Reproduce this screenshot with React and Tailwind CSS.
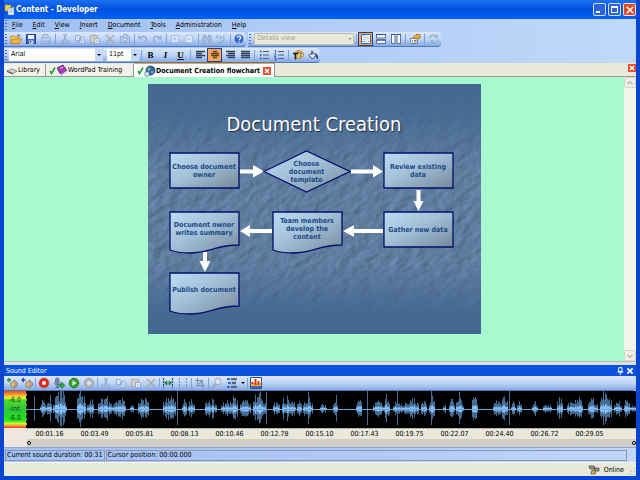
import clsx from 'clsx'

const MENU = ['File', 'Edit', 'View', 'Insert', 'Document', 'Tools', 'Administration', 'Help']

const TIMES = [
  '00:01.16', '00:03.49', '00:05.81', '00:08.13', '00:10.46', '00:12.78', '00:15.10',
  '00:17.43', '00:19.75', '00:22.07', '00:24.40', '00:26.72', '00:29.05'
]

// [start, end, peak] of each burst in the recording
const BURSTS = [
  [13, 20, 10], [20, 25, 11], [26, 31, 12], [27, 40, 17], [50, 59, 18], [60, 67, 11], [71, 84, 11], [84, 90, 9],
  [88, 99, 13], [103, 107, 5], [111, 122, 13], [136, 149, 14], [155, 160, 10], [161, 168, 10], [178, 190, 10],
  [194, 205, 9], [203, 211, 15], [213, 224, 11], [226, 239, 18], [246, 253, 8], [255, 263, 14], [263, 269, 8],
  [270, 275, 8], [276, 286, 11], [293, 300, 5], [306, 311, 8], [329, 335, 12], [346, 357, 8], [357, 363, 15],
  [366, 376, 8], [376, 382, 9], [381, 392, 11], [394, 400, 9], [402, 408, 13], [416, 419, 6], [422, 428, 10],
  [429, 437, 11], [445, 451, 14], [466, 474, 9], [472, 481, 13], [484, 489, 7], [490, 495, 9], [505, 511, 9],
  [516, 525, 5], [530, 536, 14], [540, 547, 9], [546, 556, 13], [561, 571, 12], [573, 585, 18], [587, 595, 8],
  [597, 603, 11], [603, 609, 4]
]

const SPIKES = [
  [7, 13], [23, 14], [36, 18], [53, 18], [80, 13], [150, 18], [239, 17], [281, 17], [309, 14], [340, 18],
  [370, 18], [404, 18], [432, 17], [482, 18], [576, 18]
]

const buildWave = () => {
  let seed = 11
  const rand = () => {
    seed = (seed * 16807) % 2147483647
    return seed / 2147483647
  }
  let outer = ''
  let core = ''
  BURSTS.forEach(([from, to, peak]) => {
    for (let x = from; x < to; x++) {
      const shape = 0.45 + 0.55 * Math.sin((Math.PI * (x - from + 0.5)) / (to - from))
      const up = peak * shape * (0.35 + 0.75 * rand())
      const down = up * (0.75 + 0.25 * rand())
      outer += `M${x}.5 ${(18 - up).toFixed(1)}V${(18 + down).toFixed(1)}`
      const c = Math.max(1, up * 0.3)
      core += `M${x}.5 ${(18 - c).toFixed(1)}V${(18 + c).toFixed(1)}`
    }
  })
  SPIKES.forEach(([x, h]) => {
    outer += `M${x}.5 ${18 - h}V${18 + h * 0.9}`
  })
  return { outer, core }
}

const WAVE = buildWave()

const Icon = ({ children, size = 12 }) => (
  <svg width={size} height={size} viewBox="0 0 12 12" fill="none" className="shrink-0" aria-hidden="true">
    {children}
  </svg>
)

const GRAY = '#8fa9cf'

const ICONS = {
  open: (
    <>
      <path d="M1 10V3h3l1 1h4v2" fill="#f7d57a" stroke="#b98425" />
      <path d="M1 10.5 3 6h8.5L9.5 10.5z" fill="#f9b53c" stroke="#b4751a" strokeWidth=".7" />
      <path d="M7 2.500c1.500-1 3-.5 3 1" stroke="#31538f" />
    </>
  ),
  save: (
    <>
      <path d="M1.500 1.500h9v9h-9z" fill="#3f68c4" stroke="#26408c" />
      <path d="M3 2h6v4H3z" fill="#eef3ff" />
      <path d="M4 7.500h4.500V11H4z" fill="#c9d3e8" />
      <path d="M5 8h1v2H5z" fill="#26408c" />
    </>
  ),
  print: (
    <>
      <path d="M3 5V1.500h5V5M1.500 5h9v4h-9zM3 8h6v2.500H3z" stroke={GRAY} fill="#c3d5f1" strokeWidth=".9" />
      <circle cx="9.500" cy="9" r="1.500" fill={GRAY} />
    </>
  ),
  cut: (
    <>
      <path d="M7.500 1 4.500 8M4.500 1 7.500 8" stroke={GRAY} strokeWidth="1.200" />
      <circle cx="3.500" cy="9.500" r="1.500" stroke={GRAY} />
      <circle cx="8.500" cy="9.500" r="1.500" stroke={GRAY} />
    </>
  ),
  copy: (
    <path d="M1.500 2.500h4l1 1v4h-5zM5.500 4.500h4l1 1v5h-5zM7 7h2M7 9h2" stroke={GRAY} fill="#d5e2f7" strokeWidth=".9" />
  ),
  paste: (
    <>
      <path d="M1.500 2.500h7v7h-7z" fill="#d6cfc0" stroke="#a9a9b0" />
      <path d="M3.500 1.500h3v2h-3z" fill="#b9b9c0" />
      <path d="M5.500 5.500h4l1 1v4h-5zM7 8h2" fill="#e5ebf7" stroke={GRAY} />
    </>
  ),
  remove: <path d="m2 2 8 8M10 2 2 10" stroke="#a8a69f" strokeWidth="1.300" />,
  camera: (
    <>
      <path d="M1.500 3.500H4l1-2h3l1 2h1.500v6h-9z" fill="#bccfef" stroke={GRAY} />
      <circle cx="6" cy="6.500" r="2" stroke="#7f9ccc" fill="#dce8fa" />
    </>
  ),
  undo: <path d="M2 2.500V6h3.500M2.500 5.500C4 3 8.500 2.500 9.500 5.500c.3 1.500-.5 2.500-2 3.500" stroke={GRAY} strokeWidth="1.200" />,
  redo: <path d="M10 2.500V6H6.500M9.500 5.500C8 3 3.500 2.500 2.500 5.500c-.3 1.500.5 2.500 2 3.500" stroke={GRAY} strokeWidth="1.200" />,
  expand: <path d="M2.500 2.500h7v7h-7zM6 4v4M4 6h4" stroke="#a9c0e6" fill="#dbe7fa" />,
  collapse: <path d="M2.500 2.500h7v7h-7zM4 6h4" stroke="#a9c0e6" fill="#dbe7fa" />,
  find: (
    <path d="M2.500 2h2v2h3V2h2l1 4v4.500H7.500V7h-3v3.500H1.500V6z" fill="#a5bbdd" stroke={GRAY} strokeWidth=".8" />
  ),
  spell: (
    <>
      <path d="M1 5.500 2 2l1 3.500M1.300 4.500h1.500M5 2v3.500h1.500V3.800H5M10 2.300H8.500v3H10" stroke={GRAY} strokeWidth=".8" />
      <path d="m3.500 8 2 2.500L9.500 6" stroke="#93b5c9" strokeWidth="1.500" />
    </>
  ),
  help: (
    <>
      <circle cx="6" cy="6" r="5" fill="#2f66cf" stroke="#b9cdf2" />
      <path d="M4.300 4.700C4.300 2.500 8 2.700 7.700 4.800 7.500 6 6 5.800 6 7.300M6 8.300v1.300" stroke="#fff" strokeWidth="1.300" />
    </>
  ),
  layoutGrid: (
    <>
      <path d="M1.500 1.500h9v9h-9z" fill="#f4f8ff" stroke="#4268ab" />
      <path d="M4 2v8M2 8.500h8" stroke="#7a9bd0" strokeDasharray="1 1" />
      <path d="M5 3h4v4H5z" fill="#d3e1f7" />
    </>
  ),
  layoutRows: (
    <>
      <path d="M1.500 1.500h9v3.500h-9zM1.500 7h9v3.500h-9z" fill="#f4f8ff" stroke="#5f7396" />
      <path d="M1 1.500h10M1 7h10" stroke="#2e4d8a" />
    </>
  ),
  layoutCols: (
    <>
      <path d="M1.500 1.500H5v9H1.500zM7 1.500h3.500v9H7z" fill="#f4f8ff" stroke="#5f7396" />
      <path d="M1 1.500h4.500M6.500 1.500H11" stroke="#2e4d8a" />
    </>
  ),
  props: (
    <>
      <path d="M1.500 5.500h7v5h-7z" fill="#f3f3f0" stroke="#77849d" />
      <path d="M3 7.500h1M5 7.500h2.500M3 9h1M5 9h2.500" stroke="#42557f" strokeWidth=".8" />
      <path d="M4 5 7 1.500h4V5L8 6z" fill="#efab42" stroke="#94601a" strokeWidth=".7" />
    </>
  ),
  refresh: (
    <path d="M1.500 5.500C2 2 6.500 1 9 3.500V1.500M9.300 4H6.500M10.500 6.500C10 10 5.500 11 3 8.500v2M2.700 8h2.800" stroke="#8fb9b9" strokeWidth="1.300" />
  ),
  alignLeft: <path d="M2 2.500h9M2 4.500h6M2 6.500h9M2 8.500h6" stroke="#33405c" strokeWidth="1.400" />,
  alignCenter: <path d="M4 2.500h4M2 4.500h8M2 6.500h8M4 8.500h4" stroke="#5a4026" strokeWidth="1.500" />,
  alignRight: <path d="M2 2.500h9M4 4.500h7M2 6.500h9M4 8.500h7" stroke="#33405c" strokeWidth="1.400" />,
  justify: <path d="M2 2.500h9M2 4.500h9M2 6.500h9M2 8.500h9" stroke="#33405c" strokeWidth="1.400" />,
  bullets: (
    <>
      <path d="M2 2.500h1.500M2 6h1.500M2 9.500h1.500" stroke="#1f49a8" strokeWidth="1.500" />
      <path d="M5 2.500h6M5 6h6M5 9.500h6" stroke="#4d5c78" />
    </>
  ),
  numbers: (
    <>
      <path d="M2.500 1v2.500M1.500 5H3L1.500 7.500H3M1.500 9H3v2H1.500" stroke="#1f49a8" strokeWidth=".9" />
      <path d="M5 2.500h6M5 6h6M5 9.500h6" stroke="#4d5c78" />
    </>
  ),
  palette: (
    <>
      <ellipse cx="7" cy="5.500" rx="4.500" ry="4" fill="#f0c66a" stroke="#a8782a" strokeWidth=".7" />
      <circle cx="6.500" cy="3.500" r="1" fill="#d3392a" />
      <circle cx="9" cy="4.500" r="1" fill="#2d62cf" />
      <circle cx="8.500" cy="7.300" r="1" fill="#3aa23a" />
      <path d="M1 4.500h5M3.500 4.500v6" stroke="#1c1c1c" strokeWidth="1.500" />
    </>
  ),
  bucket: (
    <>
      <path d="m2 6.500 3.500-3.500L9 6.500 5.500 10z" fill="#e6ecf6" stroke="#26304d" strokeWidth=".9" />
      <path d="M5 1.500V6" stroke="#26304d" />
      <path d="M8 4.500c2 0 3.500 2 3 5.500C9.500 9.500 9 8 8.500 7z" fill="#28499c" />
    </>
  ),
  soundIn: (
    <>
      <path d="M1 3h4M3 1v4" stroke="#1d8f2b" strokeWidth="1.300" />
      <path d="M5 6 9 3v8L5 9z" fill="#e8c27d" stroke="#8c6428" strokeWidth=".8" />
      <path d="M10.500 4.500c1 1.500 1 3.500 0 5" stroke="#8c6428" />
    </>
  ),
  soundOut: (
    <>
      <path d="M.5 3H5M3 1 1 3l2 2" stroke="#1d3f9f" strokeWidth="1.200" />
      <path d="M5 6 9 3v8L5 9z" fill="#e8c27d" stroke="#8c6428" strokeWidth=".8" />
      <path d="M10.500 4.500c1 1.500 1 3.500 0 5" stroke="#8c6428" />
    </>
  ),
  record: (
    <>
      <circle cx="6" cy="6" r="5" fill="#e3251b" stroke="#b9544e" strokeWidth=".6" />
      <circle cx="6" cy="6" r="2" fill="#fff" />
    </>
  ),
  mic: (
    <>
      <rect x="2.500" y="1" width="3.500" height="5.500" rx="1.700" fill="#7a8aa8" stroke="#43527a" strokeWidth=".7" />
      <path d="M1.500 5.500c0 3 5 3 5.500 0M4.300 8v2.500M2.500 10.500H6" stroke="#43527a" strokeWidth=".9" />
      <path d="M6 7h2.500V5L12 8.300 8.500 11.500v-2H6z" fill="#2fa53b" stroke="#146a1f" strokeWidth=".5" />
    </>
  ),
  play: (
    <>
      <circle cx="6" cy="6" r="4.700" fill="#36a52f" stroke="#1d6d1b" />
      <path d="M4.500 3.500 8.500 6l-4 2.500z" fill="#fff" />
    </>
  ),
  stop: (
    <>
      <circle cx="6" cy="6" r="4.600" fill="#b4b7bd" stroke="#9a9da5" />
      <circle cx="6" cy="6" r="2" fill="#dde3ee" />
    </>
  ),
  fit: (
    <>
      <path d="M1.500 1v10M10.500 1v10" stroke="#1c3da8" strokeDasharray="2 1" strokeWidth="1.200" />
      <path d="M3 6h6M5 4 3 6l2 2M7 4l2 2-2 2" stroke="#157a2c" strokeWidth="1.200" />
    </>
  ),
  marks: <path d="M2.500 1v10M9.500 1v10" stroke="#7289b5" strokeDasharray="2 1" />,
  crop: <path d="M3.500 1v7.500H11M1 3.500h7.500V11M5 7l3-3" stroke="#7c8ca9" strokeWidth="1.100" />,
  zoom: (
    <>
      <circle cx="7" cy="4.500" r="3.200" fill="#dbe2ec" stroke="#a1a6b0" />
      <path d="m1.500 10.500 3-3.500" stroke="#a1a6b0" strokeWidth="2" />
    </>
  ),
  tracks: (
    <>
      <path d="M1 2h3M2 6h3M1 10h3" stroke="#3569c7" strokeWidth="2" />
      <path d="M5 2h6M6 6h4M5 10h6" stroke="#3a4661" strokeWidth="1.300" />
      <path d="M5 4h5M5 8h5" stroke="#8a97b3" strokeWidth=".8" />
    </>
  ),
  levels: (
    <>
      <path d="M.5.5h11v11H.5z" fill="#f7f3e4" stroke="#31509b" />
      <path d="M1 6h10v3H1z" fill="#f5b52b" />
      <path d="M2.500 5v2M5.500 2v6M8.500 4v4" stroke="#d82b1c" strokeWidth="1.800" />
      <path d="M1 9h10v2H1z" fill="#3b67c0" />
    </>
  )
}

const ToolButton = ({ icon, label, active, narrow, children }) => (
  <button
    type="button"
    aria-label={label}
    className={clsx(
      'flex h-[14px] shrink-0 items-center justify-center text-black',
      narrow ? 'w-[14px]' : 'w-[15px]',
      active && 'border border-[#26407f] bg-[#f9a75a]'
    )}
  >
    {icon ? <Icon>{ICONS[icon]}</Icon> : children}
  </button>
)

const Separator = ({ tight }) => (
  <span className={clsx('flex h-[10px] shrink-0 justify-center', tight ? 'w-[2px]' : 'w-1')}>
    <span className="w-px bg-[#7d9fdb]" />
  </span>
)

const Grip = () => (
  <span className="mx-px h-[10px] w-[2px] shrink-0 bg-[repeating-linear-gradient(to_bottom,#4a6fb5_0px,#4a6fb5_1px,transparent_1px,transparent_3px)]" />
)

const Toolbar = ({ children, className }) => (
  <div
    role="toolbar"
    className={clsx(
      'flex h-[15px] items-center rounded-r-sm border-b border-[#4f78be] bg-linear-to-b from-[#dbe8fc] via-[#bfd5f7] to-[#86a9e2]',
      className
    )}
  >
    {children}
  </div>
)

const Combo = ({ label, value, className, disabled }) => (
  <div className={clsx('relative flex h-3 shrink-0', className)}>
    <select
      aria-label={label}
      defaultValue={value}
      disabled={disabled}
      className={clsx(
        'w-full appearance-none px-0.5 text-[7px] leading-none',
        disabled ? 'border border-[#c0c0aa] bg-[#e9e9dd] text-[#a3a08c]' : 'bg-white text-black'
      )}
    >
      <option>{value}</option>
    </select>
    <span
      className={clsx(
        'pointer-events-none absolute inset-y-0 right-0 flex w-2 items-center justify-center',
        disabled ? 'text-[#a3a08c]' : 'bg-[#c5d9f8] text-black'
      )}
    >
      <svg width="4" height="2" viewBox="0 0 4 2" fill="currentColor" aria-hidden="true">
        <path d="M0 0h4L2 2z" />
      </svg>
    </span>
  </div>
)

const TitleBar = () => (
  <header className="-mx-1 flex h-[19px] shrink-0 items-center bg-linear-to-b from-[#1d6ff2] via-[#0050e0] to-[#0162fb] px-1 text-white">
    <Icon>
      <path d="M1 1h6v6H1z" fill="#ffd94c" stroke="#9a7a18" strokeWidth=".6" />
      <path d="M4 4h6v7H4z" fill="#f6fbff" stroke="#5b7bb0" strokeWidth=".6" />
      <path d="M5.500 6h3M5.500 8h3" stroke="#6fa2cf" />
      <path d="m8 2 3 2-2 1z" fill="#9be05c" />
    </Icon>
    <h1 className="flex-1 text-[8px] font-bold">Content - Developer</h1>
    <div className="flex gap-0.5">
      <button type="button" aria-label="Minimize" className="flex size-[13px] items-end rounded-xs border border-white/80 bg-[#2a63e0] p-0.5">
        <span className="h-[2px] w-1 bg-white" />
      </button>
      <button type="button" aria-label="Maximize" className="flex size-[13px] items-center justify-center rounded-xs border border-white/80 bg-[#2a63e0]">
        <span className="size-[7px] border border-t-2 border-white" />
      </button>
      <button type="button" aria-label="Close" className="flex size-[13px] items-center justify-center rounded-xs border border-white/80 bg-[#dd4a26]">
        <Icon size={10}>
          <path d="m2 2 8 8M10 2 2 10" stroke="#fff" strokeWidth="1.800" />
        </Icon>
      </button>
    </div>
  </header>
)

const MenuBar = () => (
  <nav className="flex h-3 shrink-0 items-center">
    <Grip />
    <ul className="ml-1 flex gap-2.5">
      {MENU.map((item) => (
        <li key={item}>
          <button type="button" className="block">
            <span className="underline">{item[0]}</span>
            {item.slice(1)}
          </button>
        </li>
      ))}
    </ul>
  </nav>
)

const Check = () => (
  <svg width="7" height="9" viewBox="0 0 7 9" fill="none" aria-hidden="true">
    <path d="m1 5 1.500 2.500L6 1.500" stroke="#1fa32a" strokeWidth="1.600" />
  </svg>
)

const CloseTab = ({ label }) => (
  <button type="button" aria-label={label} className="flex size-2 items-center justify-center bg-[#e8502f]">
    <Icon size={8}>
      <path d="m3 3 6 6M9 3 3 9" stroke="#fff" strokeWidth="2" />
    </Icon>
  </button>
)

const Tabs = () => (
  <div className="flex h-[14px] shrink-0 items-end border-b border-[#9a9a90] bg-[#e8e8db]">
    <div className="flex flex-1 items-end">
      <div role="tablist" className="flex items-end">
        <button role="tab" type="button" className="flex h-3 w-[42px] items-center border-r border-[#98988c] bg-[#f3f2ea] pl-0.5">
          <Icon>
            <path d="m1 7 5-2 5 2-4 2.500z" fill="#d5d5d0" stroke="#666" strokeWidth=".7" />
            <path d="m1 7 6 2.500v1L1 8z" fill="#444" />
          </Icon>
          Library
        </button>
        <button role="tab" type="button" className="flex h-3 w-[88px] items-center border-r border-[#98988c] bg-[#f3f2ea] pl-[3px]">
          <Check />
          <Icon>
            <path d="m1 4 6-3 4 6-6 4z" fill="#a53cc0" stroke="#4c1468" strokeWidth=".8" />
            <path d="m2 9 3 2 6-4" stroke="#e7d8ee" />
            <path d="m4 4.500 3-1.500" stroke="#f0c5f5" />
          </Icon>
          WordPad Training
        </button>
        <button role="tab" type="button" aria-selected="true" className="-mb-px flex h-[14px] items-center border-t border-t-[#f5a623] bg-white pl-[3px] font-bold whitespace-nowrap">
          <Check />
          <Icon>
            <circle cx="6.500" cy="5.500" r="4.500" fill="#2c62b8" stroke="#16366f" strokeWidth=".8" />
            <path d="M4 3c2-1.500 3 0 2.500 1.500S4 6 3 5zM7 6c2-.5 3 .5 2 2s-2 .5-2-2z" fill="#74c466" />
            <path d="M1 7h4v4H1z" fill="#dfe8f6" stroke="#5c6f92" strokeWidth=".7" />
          </Icon>
          Document Creation flowchart
        </button>
      </div>
      <div className="-mb-px flex h-[14px] items-center border-t border-r border-t-[#f5a623] border-r-[#98988c] bg-white px-[3px]">
        <CloseTab label="Close tab" />
      </div>
    </div>
    <div className="mb-1">
      <CloseTab label="Close document" />
    </div>
  </div>
)

const SHAPES = {
  rect: { w: 71, h: 37, d: 'M1 1H70V36H1Z', text: 'h-[37px]' },
  diamond: { w: 88, h: 43, d: 'M1 21.5 43.5 1 87 21.5 43.5 42Z', text: 'h-[43px]' },
  doc: { w: 71, h: 43, d: 'M1 1H70V34C46 34 42 42 20 42 12 42 6 41 1 39Z', text: 'h-[36px]' }
}

const NODES = [
  { shape: 'rect', lines: ['Choose document', 'owner'], pos: 'left-[21px] top-[68px]' },
  { shape: 'diamond', lines: ['Choose', 'document', 'template'], pos: 'left-[115px] top-[66px]' },
  { shape: 'rect', lines: ['Review existing', 'data'], pos: 'left-[235px] top-[68px]' },
  { shape: 'doc', lines: ['Document owner', 'writes summary'], pos: 'left-[21px] top-[127px]' },
  { shape: 'doc', lines: ['Team members', 'develop the', 'content'], pos: 'left-[124px] top-[127px]' },
  { shape: 'rect', lines: ['Gather new data'], pos: 'left-[235px] top-[127px]' },
  { shape: 'doc', lines: ['Publish document'], pos: 'left-[21px] top-[188px]' }
]

const Node = ({ shape, lines, pos }) => {
  const s = SHAPES[shape]
  return (
    <div className={clsx('absolute', pos)}>
      <svg width={s.w} height={s.h} viewBox={`0 0 ${s.w} ${s.h}`} className="block" aria-hidden="true">
        <path d={s.d} fill="url(#node-fill)" stroke="#04106c" strokeWidth="1.300" />
      </svg>
      <div className={clsx('absolute inset-x-0 top-0 flex flex-col items-center justify-center text-[7px] leading-2 font-bold whitespace-nowrap text-[#1c4a86]', s.text)}>
        {lines.map((line) => (
          <span key={line}>{line}</span>
        ))}
      </div>
    </div>
  )
}

const Slide = () => (
  <section className="relative h-[250px] w-[333px] shrink-0 overflow-hidden bg-[#54779f]">
    <svg className="absolute inset-0 size-full" viewBox="0 0 333 250" aria-hidden="true">
      <defs>
        <filter id="stone" x="0" y="0" width="100%" height="100%" colorInterpolationFilters="sRGB">
          <feTurbulence type="fractalNoise" baseFrequency="0.07 0.12" numOctaves="4" seed="8" result="noise" />
          <feDiffuseLighting in="noise" surfaceScale="1" lightingColor="#7093bb">
            <feDistantLight azimuth="225" elevation="58" />
          </feDiffuseLighting>
        </filter>
        <linearGradient id="fade" x1="0" y1="0" x2="0" y2="1">
          <stop offset="0" stopColor="#446891" />
          <stop offset=".1" stopColor="#446891" stopOpacity=".9" />
          <stop offset=".35" stopColor="#446891" stopOpacity="0" />
          <stop offset=".72" stopColor="#446891" stopOpacity="0" />
          <stop offset=".92" stopColor="#446891" stopOpacity=".95" />
          <stop offset="1" stopColor="#446891" />
        </linearGradient>
        <linearGradient id="node-fill" x1="0" y1="0" x2="1" y2="1">
          <stop offset="0" stopColor="#b9dcf4" />
          <stop offset=".45" stopColor="#a3c0d8" />
          <stop offset="1" stopColor="#75899a" />
        </linearGradient>
      </defs>
      <g transform="rotate(-30 166 125)">
        <rect x="-60" y="-90" width="460" height="430" filter="url(#stone)" />
      </g>
      <rect width="333" height="250" fill="url(#fade)" />
      <g fill="#fff">
        <path d="M92 85.500h13V81l11 6.500-11 6V89.500H92z" />
        <path d="M203 85.500h22V81l10 6.500-10 6V89.500h-22z" />
        <path d="M268.500 106h4v11h3l-5 10-5-10h3z" />
        <path d="M235 145h-29v-4l-11 6 11 6v-4h29z" />
        <path d="M124 145h-22v-4l-10 6 10 6v-4h22z" />
        <path d="M55 168h4v9h3.500L57 188l-5.500-11H55z" />
      </g>
    </svg>
    <h2 className="relative mt-[26px] text-center text-[20px] leading-7 text-white [text-shadow:1px_1px_1px_#1c2c40]">
      Document Creation
    </h2>
    {NODES.map((node) => (
      <Node key={node.lines[0] + node.pos} {...node} />
    ))}
  </section>
)

const SCROLL_BUTTON = 'flex h-[11px] w-full items-center justify-center rounded-xs border border-[#d5d5c8] bg-[#efefe6] text-[#b9b9ac]'

const Workspace = () => (
  <main className="flex min-h-0 flex-1 border-b border-[#b9b9ae] bg-[#a8f8d0]">
    <div className="flex min-w-0 flex-1 justify-center pt-[7px]">
      <Slide />
    </div>
    <div className="flex w-3 flex-col justify-between bg-[#f4f3ec]">
      <button type="button" aria-label="Scroll up" className={SCROLL_BUTTON}>
        <Icon size={8}>
          <path d="m2 8 4-4 4 4" stroke="currentColor" strokeWidth="2" />
        </Icon>
      </button>
      <button type="button" aria-label="Scroll down" className={SCROLL_BUTTON}>
        <Icon size={8}>
          <path d="m2 4 4 4 4-4" stroke="currentColor" strokeWidth="2" />
        </Icon>
      </button>
    </div>
  </main>
)

const SoundToolbar = () => (
  <Toolbar className="shrink-0 border-[#1d3f8f]">
    <ToolButton icon="soundIn" label="Import sound" />
    <ToolButton icon="soundOut" label="Export sound" />
    <Separator tight />
    <ToolButton icon="record" label="Record" />
    <ToolButton icon="mic" label="Record from cursor" />
    <ToolButton icon="play" label="Play" />
    <ToolButton icon="stop" label="Stop" />
    <Separator tight />
    <ToolButton icon="cut" label="Cut sound" />
    <ToolButton icon="copy" label="Copy sound" />
    <ToolButton icon="paste" label="Paste sound" />
    <ToolButton icon="remove" label="Delete sound" />
    <Separator tight />
    <ToolButton icon="fit" label="Insert silence" />
    <ToolButton icon="marks" label="Selection marks" />
    <Separator tight />
    <ToolButton icon="crop" label="Crop" />
    <Separator tight />
    <ToolButton icon="zoom" label="Zoom" />
    <ToolButton icon="tracks" label="Tracks" />
    <button type="button" aria-label="Track options" className="flex w-[7px] justify-center">
      <svg width="4" height="2" viewBox="0 0 4 2" aria-hidden="true">
        <path d="M0 0h4L2 2z" />
      </svg>
    </button>
    <Separator tight />
    <ToolButton icon="levels" label="Levels" />
  </Toolbar>
)

const SoundEditor = () => (
  <section className="shrink-0">
    <div className="h-[3px] bg-[#dcdfe6]" />
    <div className="flex h-[11px] items-center justify-between bg-[#0a52de] px-0.5 text-white">
      <h2>Sound Editor</h2>
      <div className="flex gap-0.5">
        <button type="button" aria-label="Pin">
          <Icon size={8}>
            <path d="M4 1h5v6H4zM2 7.500h9M6.500 7v5" stroke="#fff" strokeWidth="1.500" />
          </Icon>
        </button>
        <button type="button" aria-label="Close sound editor">
          <Icon size={8}>
            <path d="m2 2 8 8M10 2 2 10" stroke="#fff" strokeWidth="2.500" />
          </Icon>
        </button>
      </div>
    </div>
    <SoundToolbar />
    <div className="flex">
      <div className="flex w-[23px] shrink-0 flex-col bg-[#f0e6e0]">
        <div className="flex h-[37px] flex-col items-center justify-center border-r border-dashed border-black bg-[linear-gradient(#f04a1c,#f5a02a_10%,#e8f03a_18%,#4fdc2c_26%,#2fc63a_50%,#1fe81f_80%,#d8f03a_88%,#f59a2a_94%,#e8301c)] text-[7px] leading-[9px] text-[#123c12]">
          <span>-6.0</span>
          <span>-Inf.</span>
          <span>-6.0</span>
        </div>
      </div>
      <div className="min-w-0 flex-1">
        <svg viewBox="0 0 609 37" preserveAspectRatio="none" className="block h-[37px] w-full bg-black" role="img" aria-label="Waveform">
          <path d={WAVE.outer} stroke="#456c92" strokeWidth="1" fill="none" />
          <path d={WAVE.core} stroke="#86bff6" strokeWidth="1" fill="none" />
          <path d="M0 18.500h609" stroke="#6ba6e0" strokeWidth="1" />
        </svg>
        <ol className="flex h-[11px] items-center overflow-hidden border-t border-[#b4b4a8] bg-[#e9e8db]">
          {TIMES.map((time) => (
            <li key={time} className="w-[45px] shrink-0 text-center">{time}</li>
          ))}
        </ol>
        <div className="flex h-2 items-center justify-between bg-[#cfcec6]">
          <span className="size-1 rounded-full border border-black bg-white" />
          <span className="size-1 rounded-full border border-black bg-white" />
        </div>
      </div>
    </div>
    <div className="flex h-[15px] items-center gap-px border-t border-[#8da8d8] bg-linear-to-r from-[#a3c1f2] via-[#afc8f6] to-[#bfd8f8] p-px">
      <span className="flex h-[11px] items-center border border-[#8a97ad] px-px whitespace-nowrap">
        Current sound duration: 00:31
      </span>
      <span className="mr-2 flex h-[11px] flex-1 items-center border border-[#8a97ad] pl-px">
        Cursor position: 00:00.000
      </span>
    </div>
  </section>
)

const App = () => {
  return (
    <div className="flex h-screen flex-col overflow-hidden border-x-4 border-b-4 border-[#0a45d0] bg-linear-to-r from-[#9fbff2] via-[#b2cdf7] to-[#bfd9f8] font-['DejaVu_Sans_Condensed','DejaVu_Sans',sans-serif] text-[7px] leading-[10px] text-black">
      <TitleBar />
      <MenuBar />
      <div className="flex h-4 shrink-0 items-center gap-0.5">
        <Toolbar>
          <Grip />
          <ToolButton icon="open" label="Open" />
          <ToolButton icon="save" label="Save" />
          <ToolButton icon="print" label="Print" />
          <Separator />
          <ToolButton icon="cut" label="Cut" />
          <ToolButton icon="copy" label="Copy" />
          <ToolButton icon="paste" label="Paste" />
          <ToolButton icon="remove" label="Delete" />
          <ToolButton icon="camera" label="Capture" />
          <Separator />
          <ToolButton icon="undo" label="Undo" narrow />
          <ToolButton icon="redo" label="Redo" narrow />
          <Separator />
          <ToolButton icon="expand" label="Expand" narrow />
          <ToolButton icon="collapse" label="Collapse" narrow />
          <Separator />
          <ToolButton icon="find" label="Find" narrow />
          <ToolButton icon="spell" label="Spelling" narrow />
          <Separator />
          <ToolButton icon="help" label="Help" narrow />
        </Toolbar>
        <Toolbar>
          <Grip />
          <Combo label="View" value="Details view" className="ml-0.5 w-[100px]" disabled />
          <Separator />
          <ToolButton icon="layoutGrid" label="Single pane" active />
          <ToolButton icon="layoutRows" label="Split rows" />
          <ToolButton icon="layoutCols" label="Split columns" />
          <Separator />
          <ToolButton icon="props" label="Properties" />
          <Separator />
          <ToolButton icon="refresh" label="Refresh" />
        </Toolbar>
      </div>
      <div className="flex h-4 shrink-0 items-center">
        <Toolbar>
          <Grip />
          <Combo label="Font" value="Arial" className="ml-px w-[94px]" />
          <Combo label="Font size" value="11pt" className="ml-1 w-8" />
          <Separator />
          <ToolButton label="Bold">
            <span className="font-['Liberation_Serif',serif] text-[9px] font-bold">B</span>
          </ToolButton>
          <ToolButton label="Italic">
            <span className="font-['Liberation_Serif',serif] text-[9px] font-bold italic">I</span>
          </ToolButton>
          <ToolButton label="Underline">
            <span className="font-['Liberation_Serif',serif] text-[9px] font-bold underline">U</span>
          </ToolButton>
          <Separator />
          <ToolButton icon="alignLeft" label="Align left" />
          <ToolButton icon="alignCenter" label="Center" active />
          <ToolButton icon="alignRight" label="Align right" />
          <ToolButton icon="justify" label="Justify" />
          <Separator />
          <ToolButton icon="bullets" label="Bullets" />
          <ToolButton icon="numbers" label="Numbering" />
          <Separator />
          <ToolButton icon="palette" label="Text color" />
          <ToolButton icon="bucket" label="Fill color" />
        </Toolbar>
      </div>
      <Tabs />
      <Workspace />
      <SoundEditor />
      <footer className="flex h-[14px] shrink-0 items-center justify-end border-t border-[#f4f8ff] bg-[#e8e8db]">
        <Icon>
          <path d="M1 2h5l1 3H2zM6 4h5v3H7z" fill="#9a9a90" stroke="#3c3c38" strokeWidth=".7" />
          <path d="m4 6 4 2-1 2H3z" fill="#e2b72e" stroke="#4a4a40" strokeWidth=".7" />
        </Icon>
        <span className="mx-1">Online</span>
        <svg width="8" height="8" viewBox="0 0 8 8" fill="#b4b4a6" className="self-end" aria-hidden="true">
          <path d="M6 0h1v1H6zM3 3h1v1H3zM6 3h1v1H6zM0 6h1v1H0zM3 6h1v1H3zM6 6h1v1H6z" />
        </svg>
      </footer>
    </div>
  )
}

export default App
